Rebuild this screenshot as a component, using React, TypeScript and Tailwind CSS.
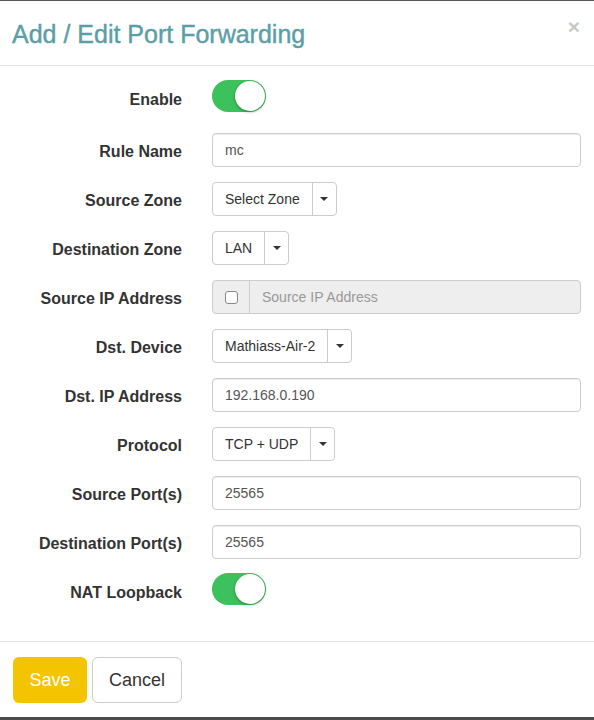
import React from "react"

const font = { fontFamily: '"Liberation Sans", Arial, sans-serif' }

function Toggle() {
  return (
    <div className="relative h-[32px] w-[54px] rounded-full bg-[#3dc15c]">
      <div className="absolute right-[1px] top-[1px] h-[30px] w-[30px] rounded-full bg-white shadow-[0_1px_3px_rgba(0,0,0,0.35)]" />
    </div>
  )
}

function Caret() {
  return <span className="inline-block h-0 w-0 border-x-[4px] border-t-[4px] border-x-transparent border-t-[#333]" />
}

function SelectBtn({ label }: { label: string }) {
  return (
    <div className="flex h-[34px] w-fit rounded-[4px] border border-[#ccc] bg-white text-[14px] text-[#333]">
      <div className="flex items-center px-[12px]">{label}</div>
      <div className="flex w-[24px] items-center justify-center border-l border-[#ccc]">
        <Caret />
      </div>
    </div>
  )
}

function TextInput({ value }: { value: string }) {
  return (
    <div className="flex h-[34px] w-full items-center rounded-[4px] border border-[#ccc] bg-white px-[12px] text-[14px] text-[#555] shadow-[inset_0_1px_1px_rgba(0,0,0,0.075)]">
      {value}
    </div>
  )
}

function Row({ label, children, toggle }: { label: string; children: React.ReactNode; toggle?: boolean }) {
  return (
    <div className={toggle ? "mb-[15px] flex h-[37px] items-start" : "mb-[15px] flex h-[34px] items-start"}>
      <div className="w-[167px] pt-[8px] text-right text-[16px] font-bold leading-[22px] text-[#333]">{label}</div>
      <div className={toggle ? "ml-[30px] -mt-[1px] flex-1" : "ml-[30px] flex-1"}>{children}</div>
    </div>
  )
}

export default function App() {
  return (
    <div style={font} className="h-[720px] w-[594px] overflow-hidden bg-white">
      <div className="flex h-[720px] flex-col border-t border-b-[3px] border-t-[#555] border-b-[#4a4a4a]">
        {/* Header */}
        <div className="relative flex h-[65px] shrink-0 items-center border-b border-[#e5e5e5] px-[12px] pt-[2px]">
          <h4 className="text-[25px] leading-[30px] text-[#5b9ea7] [-webkit-text-stroke:0.4px_#5b9ea7]">Add / Edit Port Forwarding</h4>
          <span className="absolute right-[14px] top-[15px] text-[21px] font-bold leading-[21px] text-[#c8c8c8]">×</span>
        </div>

        {/* Body */}
        <div className="shrink-0 border-b border-[#e5e5e5] pl-[15px] pr-[13px] pt-[15px] pb-[15px]">
          <Row label="Enable" toggle>
            <Toggle />
          </Row>
          <Row label="Rule Name">
            <TextInput value="mc" />
          </Row>
          <Row label="Source Zone">
            <SelectBtn label="Select Zone" />
          </Row>
          <Row label="Destination Zone">
            <SelectBtn label="LAN" />
          </Row>
          <Row label="Source IP Address">
            <div className="flex h-[34px] w-full rounded-[4px] border border-[#ccc] bg-[#eee] text-[14px]">
              <div className="flex w-[37px] items-center justify-center border-r border-[#ccc]">
                <span className="h-[13px] w-[13px] rounded-[3px] border border-[#888] bg-white" />
              </div>
              <div className="flex items-center px-[12px] text-[#999]">Source IP Address</div>
            </div>
          </Row>
          <Row label="Dst. Device">
            <SelectBtn label="Mathiass-Air-2" />
          </Row>
          <Row label="Dst. IP Address">
            <TextInput value="192.168.0.190" />
          </Row>
          <Row label="Protocol">
            <SelectBtn label="TCP + UDP" />
          </Row>
          <Row label="Source Port(s)">
            <TextInput value="25565" />
          </Row>
          <Row label="Destination Port(s)">
            <TextInput value="25565" />
          </Row>
          <Row label="NAT Loopback" toggle>
            <Toggle />
          </Row>
        </div>

        {/* Footer */}
        <div className="flex min-h-0 gap-[5px] px-[15px] pt-[15px] pl-[13px]">
          <button className="h-[46px] w-[74px] rounded-[6px] bg-[#f5c400] text-[18px] text-white">Save</button>
          <button className="h-[46px] w-[90px] rounded-[6px] border border-[#ccc] bg-white text-[18px] text-[#333]">Cancel</button>
        </div>
      </div>
    </div>
  )
}
